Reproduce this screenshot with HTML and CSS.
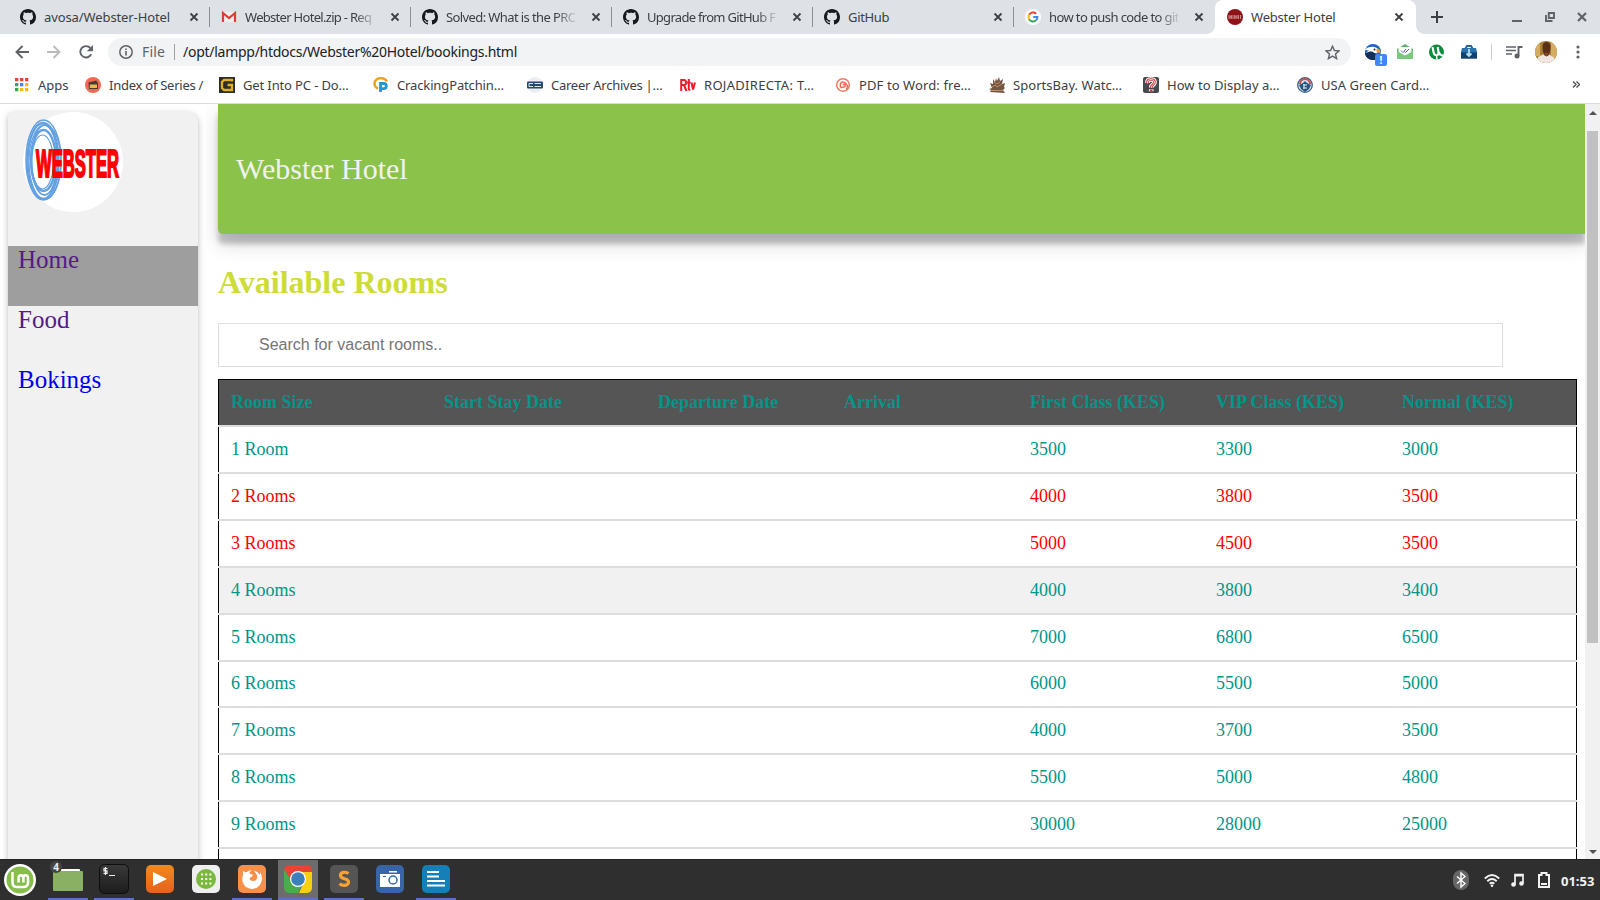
FILE: index.html
```html
<!DOCTYPE html>
<html lang="en">
<head>
<meta charset="utf-8">
<title>Webster Hotel</title>
<link rel="stylesheet" href="styles.css">
</head>
<body>
<svg class="defs" width="0" height="0">
  <symbol id="github" viewBox="0 0 16 16"><path fill="#17191c" d="M8 0C3.58 0 0 3.58 0 8c0 3.54 2.29 6.53 5.47 7.59.4.07.55-.17.55-.38 0-.19-.01-.82-.01-1.49-2.01.37-2.53-.49-2.69-.94-.09-.23-.48-.94-.82-1.13-.28-.15-.68-.52-.01-.53.63-.01 1.08.58 1.23.82.72 1.21 1.87.87 2.33.66.07-.52.28-.87.51-1.07-1.78-.2-3.64-.89-3.64-3.95 0-.87.31-1.59.82-2.15-.08-.2-.36-1.02.08-2.12 0 0 .67-.21 2.2.82.64-.18 1.32-.27 2-.27s1.36.09 2 .27c1.53-1.04 2.2-.82 2.2-.82.44 1.1.16 1.92.08 2.12.51.56.82 1.27.82 2.15 0 3.07-1.87 3.75-3.65 3.95.29.25.54.73.54 1.48 0 1.07-.01 1.93-.01 2.2 0 .21.15.46.55.38A8.01 8.01 0 0 0 16 8c0-4.42-3.58-8-8-8z"/></symbol>
  <symbol id="close" viewBox="0 0 10 10"><path d="M1.500 1.500l7 7M8.500 1.500l-7 7" stroke="#3c4043" stroke-width="1.800" fill="none"/></symbol>
</svg>

<header class="tabs">
  <div class="tab"><svg class="fav"><use href="#github"/></svg><span class="title wide">avosa/Webster-Hotel</span><svg class="x"><use href="#close"/></svg></div>
  <div class="tab"><svg class="fav" viewBox="0 0 16 16"><path d="M1 3h14v10H1z" fill="#eee"/><path d="M2 13V4l6 5 6-5v9" fill="none" stroke="#d93f33" stroke-width="2.200"/></svg><span class="title fade tight">Webster Hotel.zip - Req</span><svg class="x"><use href="#close"/></svg></div>
  <div class="tab"><svg class="fav"><use href="#github"/></svg><span class="title fade">Solved: What is the PRO</span><svg class="x"><use href="#close"/></svg></div>
  <div class="tab"><svg class="fav"><use href="#github"/></svg><span class="title fade tight">Upgrade from GitHub F</span><svg class="x"><use href="#close"/></svg></div>
  <div class="tab"><svg class="fav"><use href="#github"/></svg><span class="title">GitHub</span><svg class="x"><use href="#close"/></svg></div>
  <div class="tab last"><svg class="fav" viewBox="0 0 16 16"><circle cx="8" cy="8" r="8" fill="#fff"/><g fill="none" stroke-width="2"><path d="M4.100 5.800a4.500 4.500 0 0 1 7-1.100" stroke="#ea4335"/><path d="M4.100 5.800a4.500 4.500 0 0 0 0 4.400" stroke="#fbbc05"/><path d="M4.100 10.200a4.500 4.500 0 0 0 7 1.100" stroke="#34a853"/><path d="M11.100 11.300A4.500 4.500 0 0 0 12.400 8H8.200" stroke="#4285f4"/></g></svg><span class="title fade push">how to push code to git</span><svg class="x"><use href="#close"/></svg></div>
  <div class="tab active"><svg class="fav" viewBox="0 0 16 16"><circle cx="8" cy="8" r="8" fill="#8e1218"/><path d="M2 6v4M4 6v4M5 6v4M7 6v4M8 6v4M10 6v4M11.500 6v4M13.500 6v4M2 8h3M8 8h2" stroke="#d9a9a5" stroke-width=".8"/></svg><span class="title active-title">Webster Hotel</span><svg class="x"><use href="#close"/></svg></div>
  <svg class="plus" viewBox="0 0 12 12"><path d="M6 0v12M0 6h12" stroke="#3c4043" stroke-width="2"/></svg>
  <div class="window-buttons">
    <svg width="10" height="12" viewBox="0 0 10 12"><path d="M0 10h10" stroke="#5f6368" stroke-width="2"/></svg>
    <svg width="10" height="10" viewBox="0 0 10 10"><path d="M3.800 1h5.200v5H3.800zM1 3v6h6.500" fill="none" stroke="#5f6368" stroke-width="1.900"/></svg>
    <svg width="10" height="10" viewBox="0 0 10 10"><path d="M1 1l8 8M9 1L1 9" stroke="#5f6368" stroke-width="2.200"/></svg>
  </div>
</header>

<div class="toolbar">
  <div class="nav">
    <svg width="14" height="14" viewBox="0 0 14 14"><path d="M14 7H1.500M7.500 1L1.500 7l6 6" fill="none" stroke="#5f6368" stroke-width="1.900"/></svg>
    <svg width="14" height="14" viewBox="0 0 14 14"><path d="M0 7h12.500M6.500 1l6 6-6 6" fill="none" stroke="#babcbe" stroke-width="1.900"/></svg>
    <svg width="14" height="14" viewBox="0 0 14 14"><path d="M12.200 9.200A5.700 5.700 0 1 1 11.300 3" fill="none" stroke="#5f6368" stroke-width="1.900"/><path d="M14 0v6.200H7.800z" fill="#5f6368"/></svg>
  </div>
  <div class="omnibox">
    <svg width="14" height="14" viewBox="0 0 14 14"><circle cx="7" cy="7" r="6.200" fill="none" stroke="#5f6368" stroke-width="1.500"/><path d="M7 6v4.500M7 3.400V5" stroke="#5f6368" stroke-width="1.600"/></svg>
    <span class="scheme">File</span><i class="bar"></i><span class="url">/opt/lampp/htdocs/Webster%20Hotel/bookings.html</span>
    <svg class="star" width="15" height="15" viewBox="0 0 15 15"><path d="M7.500 1.200l1.900 4.300 4.700.4-3.600 3.100 1.100 4.600-4.100-2.500-4.100 2.500L4.500 9 .9 5.900l4.700-.4z" fill="none" stroke="#5f6368" stroke-width="1.400"/></svg>
  </div>
  <div class="extensions">
    <span class="ext"><svg width="16" height="16" viewBox="0 0 16 16"><circle cx="8" cy="8" r="8" fill="#1a62c6"/><path d="M0 9C4 6 8 7 11 10l-1 6C4 16.500 0 13 0 9z" fill="#123058"/><path d="M0 6C2 3 9 1.500 12.500 4.500 14 6 14 8 12 9c-2 .5-3 0-4-1C6 7 3 8 1 9 2 7.500 3 7 4 6.500z" fill="#fff"/><path d="M11.500 4.500c2.500 0 4.500 2 4 5.500-1-2-2.500-1.500-4-2z" fill="#f2a229"/><circle cx="9.500" cy="5.500" r="1" fill="#1c2940"/></svg><b>!</b></span>
    <svg width="16" height="16" viewBox="0 0 16 16"><path d="M0 5l8-5 8 5v4H0z" fill="#5db463"/><path d="M1.500 3h13v8H1.500z" fill="#fff"/><path d="M0 7l8 4.500L16 7v7a1 1 0 0 1-1 1H1a1 1 0 0 1-1-1z" fill="#79c87b"/><path d="M4 6.500l2 2 3-3.500M7.500 7.500l1 1L12 5" fill="none" stroke="#6a62c4"/></svg>
    <svg width="16" height="16" viewBox="0 0 16 16"><circle cx="7.500" cy="8" r="7.500" fill="#0d8a3c"/><path d="M3.500 3l1 5q.7 3.500 3 3.200T9.500 8l-.8-5M9.800 8q1 4 5 3.500" fill="none" stroke="#fff" stroke-width="2.100"/><path d="M7.500 11l.5 4.500" stroke="#fff" stroke-width="1.500"/></svg>
    <svg width="16" height="16" viewBox="0 0 16 16"><path d="M4.500 4.500L6 2h4l1.500 2.500" fill="none" stroke="#2a6299" stroke-width="2"/><path d="M1 4h14l1 4v6.500H0V8z" fill="#2a73ac"/><path d="M0 8.500h16v6H0z" fill="#14406c"/><path d="M8 5v6M5.500 9.500L8 12l2.500-2.500" fill="none" stroke="#b5e0f5" stroke-width="1.800"/></svg>
    <i class="rule"></i>
    <svg class="queue" width="17" height="14" viewBox="0 0 17 14"><path d="M0 2h10M0 5.500h10M0 9h6" stroke="#5f6368" stroke-width="1.700"/><path d="M12.500 11V2h4" fill="none" stroke="#5f6368" stroke-width="1.900"/><circle cx="11" cy="11" r="2.500" fill="#5f6368"/></svg>
    <svg class="avatar" width="22" height="22" viewBox="0 0 22 22"><clipPath id="face"><circle cx="11" cy="11" r="11"/></clipPath><g clip-path="url(#face)"><path fill="#a9802f" d="M0 0h22v22H0z"/><path fill="#d5ac61" d="M16 0h6v22h-6zM0 0h5v15H0z"/><path fill="#f2e4df" d="M2 22l1-6 5-2.500h6l5 3 1 5.500z"/><path fill="#5a2f1c" d="M7.500 6q0-5 4-5t4 5q0 6-2.500 9h-3Q7.500 12 7.500 6z"/><path fill="#8c4d2c" d="M9.500 12l2 4 2-4z"/></g></svg>
    <svg class="dots" width="4" height="14" viewBox="0 0 4 14"><g fill="#5f6368"><circle cx="2" cy="2" r="1.600"/><circle cx="2" cy="7" r="1.600"/><circle cx="2" cy="12" r="1.600"/></g></svg>
  </div>
</div>

<nav class="bookmarks">
  <span class="bm apps"><svg viewBox="0 0 16 16"><g fill="#ea4335"><path d="M1 1h3.300v3.300H1zM6 1h3.300v3.300H6zM11 1h3.300v3.300H11z"/></g><path fill="#34a853" d="M1 6h3.300v3.300H1zM1 11h3.300v3.300H1z"/><path fill="#4285f4" d="M6 6h3.300v3.300H6z"/><path fill="#fbbc05" d="M11 6h3.300v3.300H11zM6 11h3.300v3.300H6zM11 11h3.300v3.300H11z"/></svg><span>Apps</span></span>
  <span class="bm index"><svg viewBox="0 0 16 16"><circle cx="8" cy="8" r="8" fill="#ef6a50"/><path fill="#473b35" d="M3.500 5.500l8-2 .4 1.500L13 6v6H4z"/><path fill="#efb64a" d="M4.800 7.500h7.200V11H4.800z"/></svg><span>Index of Series /</span></span>
  <span class="bm get"><svg viewBox="0 0 16 16"><path fill="#292b2d" d="M0 0h16v16H0z"/><path d="M13 4.500V3H5L3 5v6l2 2h8V8H8.500" fill="none" stroke="#dfae21" stroke-width="2.300"/></svg><span>Get Into PC - Do…</span></span>
  <span class="bm get"><svg viewBox="0 0 16 16"><path d="M14 4.500A6.500 5.500 0 1 0 5 11.500" fill="none" stroke="#eaa326" stroke-width="2.500"/><path d="M7.500 15V6.500h3.200a2.600 2.600 0 0 1 0 5.200H7.500" fill="none" stroke="#2397d5" stroke-width="2.800"/></svg><span>CrackingPatchin…</span></span>
  <span class="bm career"><svg viewBox="0 0 16 16"><circle cx="8" cy="8" r="8" fill="#eceff1"/><rect y="4.500" width="16" height="7" rx="1" fill="#24496f"/><path d="M6 6.500H2v3h4M7.500 6.500h6.500M7.500 9.500h6.500" fill="none" stroke="#dce6ee"/></svg><span>Career Archives |…</span></span>
  <span class="bm roja"><svg viewBox="0 0 16 16"><path d="M1.200 14V3H4q2 0 2 2.500T4 8H1.500M4 8l2.500 6M8.800 2v10q0 1 1.500 1M7 5.500h3.500M11.500 5.500l1.500 7 2-7" fill="none" stroke="#ea1b2c" stroke-width="2"/></svg><span>ROJADIRECTA: T…</span></span>
  <span class="bm pdf"><svg viewBox="0 0 16 16"><circle cx="8" cy="8" r="6.300" fill="#fff" stroke="#f17b62" stroke-width="1.500"/><path d="M8 8q1-1.500 2 0t-2 2.300T5.300 8 8 5t4 3-1 4" fill="none" stroke="#ee6c51" stroke-width="1.500"/></svg><span>PDF to Word: fre…</span></span>
  <span class="bm sports"><svg viewBox="0 0 16 16"><path fill="#765642" d="M1 15l1-2-2-1 3-1-2-5 3 1V2l2 3 1-4 1 3 2-4 1 4 3-2-1 5 3-1-1 4 1 1-2 2 2 3z"/><path d="M3 10l3-2 2 2 5-3M5 5l3 2 3-2M2 13.500h12" stroke="#c69f7a" fill="none" stroke-width=".8"/></svg><span>SportsBay. Watc…</span></span>
  <span class="bm howto"><svg viewBox="0 0 16 16"><rect width="16" height="16" rx="2" fill="#48494c"/><path d="M4.500 6V5q0-2.500 3.500-2.500t3.500 2.500q0 2-2 3L8.300 9.500v1M8.200 12.200v2" fill="none" stroke="#fff" stroke-width="4.600"/><path d="M4.500 6.500V5q0-2.500 3.500-2.500t3.500 2.500q0 2-2 3L8.300 9.500V11M8.200 12.500v2" fill="none" stroke="#cf3036" stroke-width="2.600"/><path d="M4.500 6.500V5q0-2.500 3.500-2.500t3.500 2.500q0 2-2 3L8.300 9.500V11" fill="none" stroke="#fff" stroke-width=".8"/></svg><span>How to Display a…</span></span>
  <span class="bm howto"><svg viewBox="0 0 16 16"><circle cx="8" cy="8" r="7.300" fill="#d4e1e9" stroke="#3b6386" stroke-width="1.300"/><path d="M3 7a5 5 0 0 1 10 0" fill="none" stroke="#c74c50" stroke-width="2"/><path fill="#28557f" d="M2 8l4-2 2-2 2 2 4 2-2 4-4 3-4-3z"/><path d="M6 8h4M6 11h4M7 7v5" stroke="#e9f1f5"/></svg><span>USA Green Card…</span></span>
  <svg class="more" viewBox="0 0 8 7"><path d="M1 .5l3 3-3 3M4.500 .5l3 3-3 3" fill="none" stroke="#4c5054" stroke-width="1.400"/></svg>
</nav>

<div class="viewport">
  <aside class="sidebar">
    <svg class="logo" viewBox="0 0 100 100">
      <circle cx="50" cy="50" r="50" fill="#fff"/>
      <g fill="none" stroke="#63a1e2">
        <ellipse cx="20.500" cy="48" rx="17.500" ry="40" stroke-width="1.500"/>
        <ellipse cx="20" cy="49" rx="15.500" ry="38" stroke-width="2.400"/>
        <ellipse cx="21.500" cy="48" rx="13" ry="35" stroke-width="1.800"/>
        <ellipse cx="20.500" cy="48.500" rx="12.500" ry="30.500" stroke-width="2.400"/>
        <ellipse cx="19.500" cy="50" rx="11" ry="27" stroke-width="1.200"/>
        <ellipse cx="22" cy="50" rx="16" ry="37" stroke-width="1.300"/>
      </g>
      <text class="logo-text" x="13" y="65" textLength="83" lengthAdjust="spacingAndGlyphs">WEBSTER</text>
    </svg>
    <a class="link current">Home</a>
    <a class="link">Food</a>
    <a class="link unvisited">Bokings</a>
  </aside>
  <main class="main">
    <div class="banner">Webster Hotel</div>
    <h1>Available Rooms</h1>
    <input class="search" type="text" placeholder="Search for vacant rooms..">
    <div class="table">
      <div class="row head"><span>Room Size</span><span>Start Stay Date</span><span>Departure Date</span><span>Arrival</span><span>First Class (KES)</span><span>VIP Class (KES)</span><span>Normal (KES)</span></div>
      <div class="row"><span>1 Room</span><span></span><span></span><span></span><span>3500</span><span>3300</span><span>3000</span></div>
      <div class="row taken"><span>2 Rooms</span><span></span><span></span><span></span><span>4000</span><span>3800</span><span>3500</span></div>
      <div class="row taken"><span>3 Rooms</span><span></span><span></span><span></span><span>5000</span><span>4500</span><span>3500</span></div>
      <div class="row hovered"><span>4 Rooms</span><span></span><span></span><span></span><span>4000</span><span>3800</span><span>3400</span></div>
      <div class="row"><span>5 Rooms</span><span></span><span></span><span></span><span>7000</span><span>6800</span><span>6500</span></div>
      <div class="row short"><span>6 Rooms</span><span></span><span></span><span></span><span>6000</span><span>5500</span><span>5000</span></div>
      <div class="row"><span>7 Rooms</span><span></span><span></span><span></span><span>4000</span><span>3700</span><span>3500</span></div>
      <div class="row"><span>8 Rooms</span><span></span><span></span><span></span><span>5500</span><span>5000</span><span>4800</span></div>
      <div class="row"><span>9 Rooms</span><span></span><span></span><span></span><span>30000</span><span>28000</span><span>25000</span></div>
      <div class="row"></div>
    </div>
  </main>
  <div class="scrollbar">
    <svg width="8" height="4" viewBox="0 0 8 4"><path d="M0 4l4-4 4 4z" fill="#505050"/></svg>
    <i class="thumb"></i>
    <svg width="8" height="4" viewBox="0 0 8 4"><path d="M0 0l4 4 4-4z" fill="#505050"/></svg>
  </div>
</div>

<footer class="taskbar">
  <div class="launch menu"><svg width="32" height="32" viewBox="0 0 32 32"><circle cx="16" cy="16" r="16" fill="#fff"/><circle cx="16" cy="16" r="13.500" fill="#87bd4b"/><path d="M8.500 8v10.500q0 4.500 4.500 4.500h6.500q4.500 0 4.500-4.500v-4.500q0-2.800-2.300-2.800t-2.300 2.800v4.500M19.400 14q0-2.800-2.400-2.800t-2.400 2.800v4.500" fill="none" stroke="#fff" stroke-width="2.500"/></svg></div>
  <div class="launch open"><svg width="30" height="28" viewBox="0 0 30 28"><path d="M8 4h18q1 0 1 1v5H8z" fill="#fff"/><path d="M0 7q0-1 1-1h28q1 0 1 1v18q0 1-1 1H1q-1 0-1-1z" fill="#8ab163"/></svg><b class="count">4</b></div>
  <div class="launch open"><svg width="30" height="30" viewBox="0 0 30 30"><defs><linearGradient id="term" x2="0" y2="1"><stop stop-color="#3a3a3a"/><stop offset="1" stop-color="#1c1c1c"/></linearGradient></defs><rect x=".5" y=".5" width="29" height="29" rx="5" fill="url(#term)" stroke="#0d0d0d"/><path d="M8.500 4.500H5v2.300h3v2.500H4.500M6.500 3v8M10 11.500h6" fill="none" stroke="#eee" stroke-width="1.200"/></svg></div>
  <div class="launch"><svg width="28" height="28" viewBox="0 0 28 28"><defs><linearGradient id="play" x2="0" y2="1"><stop stop-color="#f08a1e"/><stop offset="1" stop-color="#e8611a"/></linearGradient></defs><rect width="28" height="28" rx="5" fill="url(#play)"/><path d="M7 7l14 7-14 7z" fill="#fff"/></svg></div>
  <div class="launch"><svg width="28" height="28" viewBox="0 0 28 28"><rect width="28" height="28" rx="5" fill="#efefef"/><circle cx="14" cy="14" r="10" fill="#7ab83e"/><path d="M9 9.500h10.500M9 14h10.500M9 18.500h10.500" stroke="#fff" stroke-width="2" stroke-dasharray="2 2.200"/></svg></div>
  <div class="launch open"><svg width="28" height="28" viewBox="0 0 28 28"><rect width="28" height="28" rx="5" fill="#f7914a"/><path d="M5 6l3 1.500Q11 5 14 5q-3 1.500-2.500 3.500L15 10q-.5 2-3.500 3 0 3 4 3 3 0 3.500-2.500 1-3-1.500-5.500L16 5.500q4 1 6 4.500l0-3q3 5 1.500 9.500-2 7-9.500 7.500-7.500-.5-9.500-7.500Q4 12 5 10z" fill="#fff"/></svg></div>
  <div class="launch open focused"><svg width="28" height="28" viewBox="0 0 28 28"><clipPath id="sq"><rect width="28" height="28" rx="5"/></clipPath><g clip-path="url(#sq)"><path fill="#e84436" d="M0 0h28v7H14L8 17 0 4z"/><path fill="#4eab4b" d="M0 4l8 13 10 3-4 8H0z"/><path fill="#f8d012" d="M14 7h14v21H15l5-11z"/></g><circle cx="14" cy="14" r="8" fill="#fff"/><circle cx="14" cy="14" r="6.800" fill="#3c7fb9"/></svg></div>
  <div class="launch open"><svg width="28" height="28" viewBox="0 0 28 28"><rect width="28" height="28" rx="5" fill="#555"/><path d="M18.500 8.500q-2.500-1.500-5-1.200-3 .4-3 2.900t4 3.500 4 3.500-4 3.200q-3 0-5-1.700" fill="none" stroke="#f7a233" stroke-width="3.200"/></svg></div>
  <div class="launch"><svg width="28" height="28" viewBox="0 0 28 28"><rect width="28" height="28" rx="5" fill="#3765a8"/><path d="M4 9h20v13H4zM13 6h8v1.500h-8z" fill="#fff"/><circle cx="17" cy="15" r="4" fill="#fff" stroke="#3765a8" stroke-width="1.500"/><path d="M7 11.500h3" stroke="#3765a8"/></svg></div>
  <div class="launch open"><svg width="28" height="28" viewBox="0 0 28 28"><rect width="28" height="28" rx="5" fill="#1580b8"/><path d="M5 7h12M5 11.500h12M5 16h18M5 20.500h18" stroke="#fff" stroke-width="2"/></svg></div>
  <div class="tray">
    <svg width="16" height="20" viewBox="0 0 16 20"><rect width="16" height="20" rx="8" fill="#666"/><path d="M4 6.500l8 7L8 17V3l4 3.500-8 7" fill="none" stroke="#fff" stroke-width="1.400"/></svg>
    <svg class="wifi" width="16" height="13" viewBox="0 0 16 13"><g fill="none" stroke="#f2f2f2" stroke-width="1.900"><path d="M.8 4.500q7.200-6.800 14.400 0M3.300 7.200q4.700-4.300 9.400 0M5.700 9.700q2.300-2 4.600 0"/></g><circle cx="8" cy="11.700" r="1.300" fill="#f2f2f2"/></svg>
    <svg class="note" width="13" height="14" viewBox="0 0 13 14"><path d="M4 11.500V1.500h8V10" fill="none" stroke="#f2f2f2" stroke-width="1.700"/><path d="M4 2.500h8" stroke="#f2f2f2" stroke-width="2"/><circle cx="2.500" cy="11.500" r="2.300" fill="#f2f2f2"/><circle cx="10.500" cy="10.500" r="2.300" fill="#f2f2f2"/></svg>
    <svg class="battery" width="12" height="16" viewBox="0 0 12 16"><path d="M1 3h2.500V1h5v2H11v12H1z" fill="none" stroke="#f2f2f2" stroke-width="2"/><path d="M3 12h6" stroke="#f2f2f2" stroke-width="2"/></svg>
    <span class="clock">01:53</span>
  </div>
</footer>
</body>
</html>
```

FILE: styles.css
```css
* { box-sizing: border-box; }
body {
  margin: 0;
  width: 1600px;
  height: 900px;
  overflow: hidden;
  display: flex;
  flex-direction: column;
  background: #fff;
  font-family: "Noto Sans", "Open Sans", sans-serif;
  font-size: 13px;
  color: #3c4043;
}
svg { display: block; flex: none; }
.defs { position: absolute; }

/* Browser tabs */
.tabs { flex: none; height: 34px; background: #dee1e6; display: flex; align-items: center; padding-left: 9px; }
.tab { flex: none; width: 201px; height: 20px; display: flex; align-items: center; padding-left: 11px; border-right: 1px solid #8b8e92; }
.tab.last { border-right-color: transparent; }
.tab.active { position: relative; height: 34px; width: 201px; padding-left: 12px; background: #fff; border: 0; border-radius: 8px 8px 0 0; }
.tab.active::before, .tab.active::after { content: ""; position: absolute; bottom: 0; width: 8px; height: 8px; }
.tab.active::before { left: -8px; background: radial-gradient(circle at 0 0, transparent 7.5px, #fff 8px); }
.tab.active::after { right: -8px; background: radial-gradient(circle at 100% 0, transparent 7.5px, #fff 8px); }
.fav { width: 16px; height: 16px; }
.title { width: 129px; margin-left: 8px; white-space: nowrap; letter-spacing: -.33px; }
.title.wide { letter-spacing: -.1px; }
.title.tight { letter-spacing: -.7px; }
.title.push { letter-spacing: -.55px; }
.title.active-title { width: 128px; margin-left: 8px; letter-spacing: -.2px; }
.title.fade {
  letter-spacing: -.6px;
  -webkit-mask-image: linear-gradient(to right, #000 110px, rgba(0,0,0,.15) 129px);
  mask-image: linear-gradient(to right, #000 110px, rgba(0,0,0,.15) 129px);
}
.title.fade.tight { letter-spacing: -.7px; }
.x { width: 10px; height: 10px; margin-left: 16px; }
.active .x { margin-left: 15px; }
.plus { width: 12px; height: 12px; margin-left: 15px; }
.window-buttons { margin-left: auto; display: flex; align-items: center; gap: 22px; padding-right: 13px; }
.window-buttons svg:first-child { margin-right: 1px; }

/* Address bar */
.toolbar { flex: none; height: 36px; display: flex; align-items: center; padding: 0 20px 0 15px; }
.nav { display: flex; gap: 18px; width: 93px; }
.omnibox { width: 1243px; height: 28px; border-radius: 14px; background: #f1f3f4; display: flex; align-items: center; padding: 0 11px; font-size: 14px; }
.scheme { width: 25px; margin-left: 9px; padding-bottom: 2px; color: #5f6368; letter-spacing: .2px; }
.bar { width: 1px; height: 16px; margin-left: 7px; background: #9aa0a6; }
.url { margin-left: 8px; padding-bottom: 2px; color: #202124; letter-spacing: -.27px; white-space: nowrap; }
.star { margin-left: auto; }
.extensions { display: flex; align-items: center; margin-left: 14px; gap: 16px; }
.ext { position: relative; }
.ext b { position: absolute; left: 10px; top: 10px; width: 12px; height: 12px; border-radius: 2px; background: #4285f4; color: #fff; font-size: 10px; line-height: 12px; text-align: center; }
.rule { width: 1px; height: 16px; margin-left: -2px; background: #c8cacd; }
.queue { margin-left: -2px; }
.avatar { margin-left: -4px; }
.dots { margin-left: 3px; }

/* Bookmarks */
.bookmarks { flex: none; height: 34px; display: flex; align-items: center; padding: 0 20px 4px 14px; border-bottom: 1px solid #dadce0; }
.bm { width: 154px; display: flex; align-items: center; gap: 8px; flex: none; white-space: nowrap; letter-spacing: -.25px; }
.bm svg { width: 16px; height: 16px; }
.bm.apps { width: 71px; letter-spacing: 0; }
.bm.index { width: 134px; }
.bm.get { letter-spacing: -.13px; }
.bm.career { width: 153px; }
.bm.roja { width: 155px; letter-spacing: .3px; }
.bm.pdf { letter-spacing: .1px; }
.bm.sports { letter-spacing: .05px; }
.bm.howto { letter-spacing: .03px; }
.more { width: 8px; height: 7px; margin-left: auto; }

/* Hotel page */
.viewport { flex: none; height: 755px; display: flex; overflow: hidden; font-family: "Liberation Serif", serif; }
.sidebar { flex: none; width: 190px; height: 760px; margin: 8px 20px 0 8px; background: #f1f1f1; border-radius: 5px 10px 0 0; box-shadow: 0 2px 5px rgba(0,0,0,.16), 0 2px 10px rgba(0,0,0,.12); }
.logo { width: 100px; height: 100px; margin: 0 0 34px 15px; }
.logo-text { font: bold 38px "Liberation Sans", sans-serif; fill: #f00; stroke: #f00; stroke-width: 2.2px; }
.link { display: block; height: 60px; padding-left: 10px; font-size: 25px; line-height: 27px; color: #551a8b; }
.link.current { background: #9e9e9e; }
.link.unvisited { color: #00e; }
.main { flex: none; width: 1379px; margin-left: -12px; padding-left: 12px; overflow: hidden; }
.banner { height: 130px; background: #8bc34a; border-radius: 0 0 0 5px; color: #f1f1f1; font-size: 30px; line-height: 129px; padding-left: 18px; box-shadow: 0 10px 5px rgba(0,0,0,.2), 20px 10px 5px rgba(0,0,0,.01), 0 10px 20px rgba(0,0,0,.16); }
h1 { margin: 30px 0 22px; font-size: 32px; line-height: 37px; color: #cddc39; }
.search { display: block; width: 1285px; height: 44px; margin: 0 0 12px; border: 1px solid #ddd; padding: 0 20px 1px 40px; font: 16px "Liberation Sans", sans-serif; color: #333; }
.search::placeholder { color: #757575; }
.table { width: 1359px; border-top: 1px solid #000; font-size: 18px; line-height: 21px; color: #009688; }
.row { height: 47px; display: grid; grid-template-columns: 213px 214px 186px 186px 186px 186px 1fr; padding: 12px 0 0 13px; border-bottom: 2px solid #ddd; box-shadow: inset 1px 0 #000, inset -1px 0 #000; }
.row.short { height: 46px; padding-top: 11px; }
.head { background: #555; font-weight: bold; }
.taken { color: #f00; }
.hovered { background: #f1f1f1; }
.scrollbar { width: 15px; background: #f1f1f1; display: flex; flex-direction: column; align-items: center; padding: 7px 0 5px; }
.thumb { width: 11px; height: 512px; margin: 16px 0 auto; background: #c1c1c1; }

/* Desktop panel */
.taskbar { flex: none; height: 41px; background: #2f2f2f; display: flex; border-top: 1px solid #242424; }
.launch { position: relative; flex: none; width: 40px; height: 40px; margin-right: 6px; display: flex; align-items: center; justify-content: center; border-bottom: 2px solid transparent; }
.launch.menu { margin-right: 8px; padding: 2px 0 0; }
.launch.open { border-bottom-color: #5a73c8; }
.focused { background: #6c6c6c; }
.count { position: absolute; left: 2px; top: 1px; width: 12px; height: 12px; border-radius: 6px; background: #454545; color: #eee; font-size: 10px; line-height: 12px; text-align: center; }
.tray { margin-left: auto; display: flex; align-items: center; padding-right: 5px; }
.wifi { margin-left: 15px; }
.note { margin-left: 11px; }
.battery { margin-left: 14px; }
.clock { width: 34px; margin-left: 11px; color: #f2f2f2; font-weight: bold; padding-top: 2px; }
```
